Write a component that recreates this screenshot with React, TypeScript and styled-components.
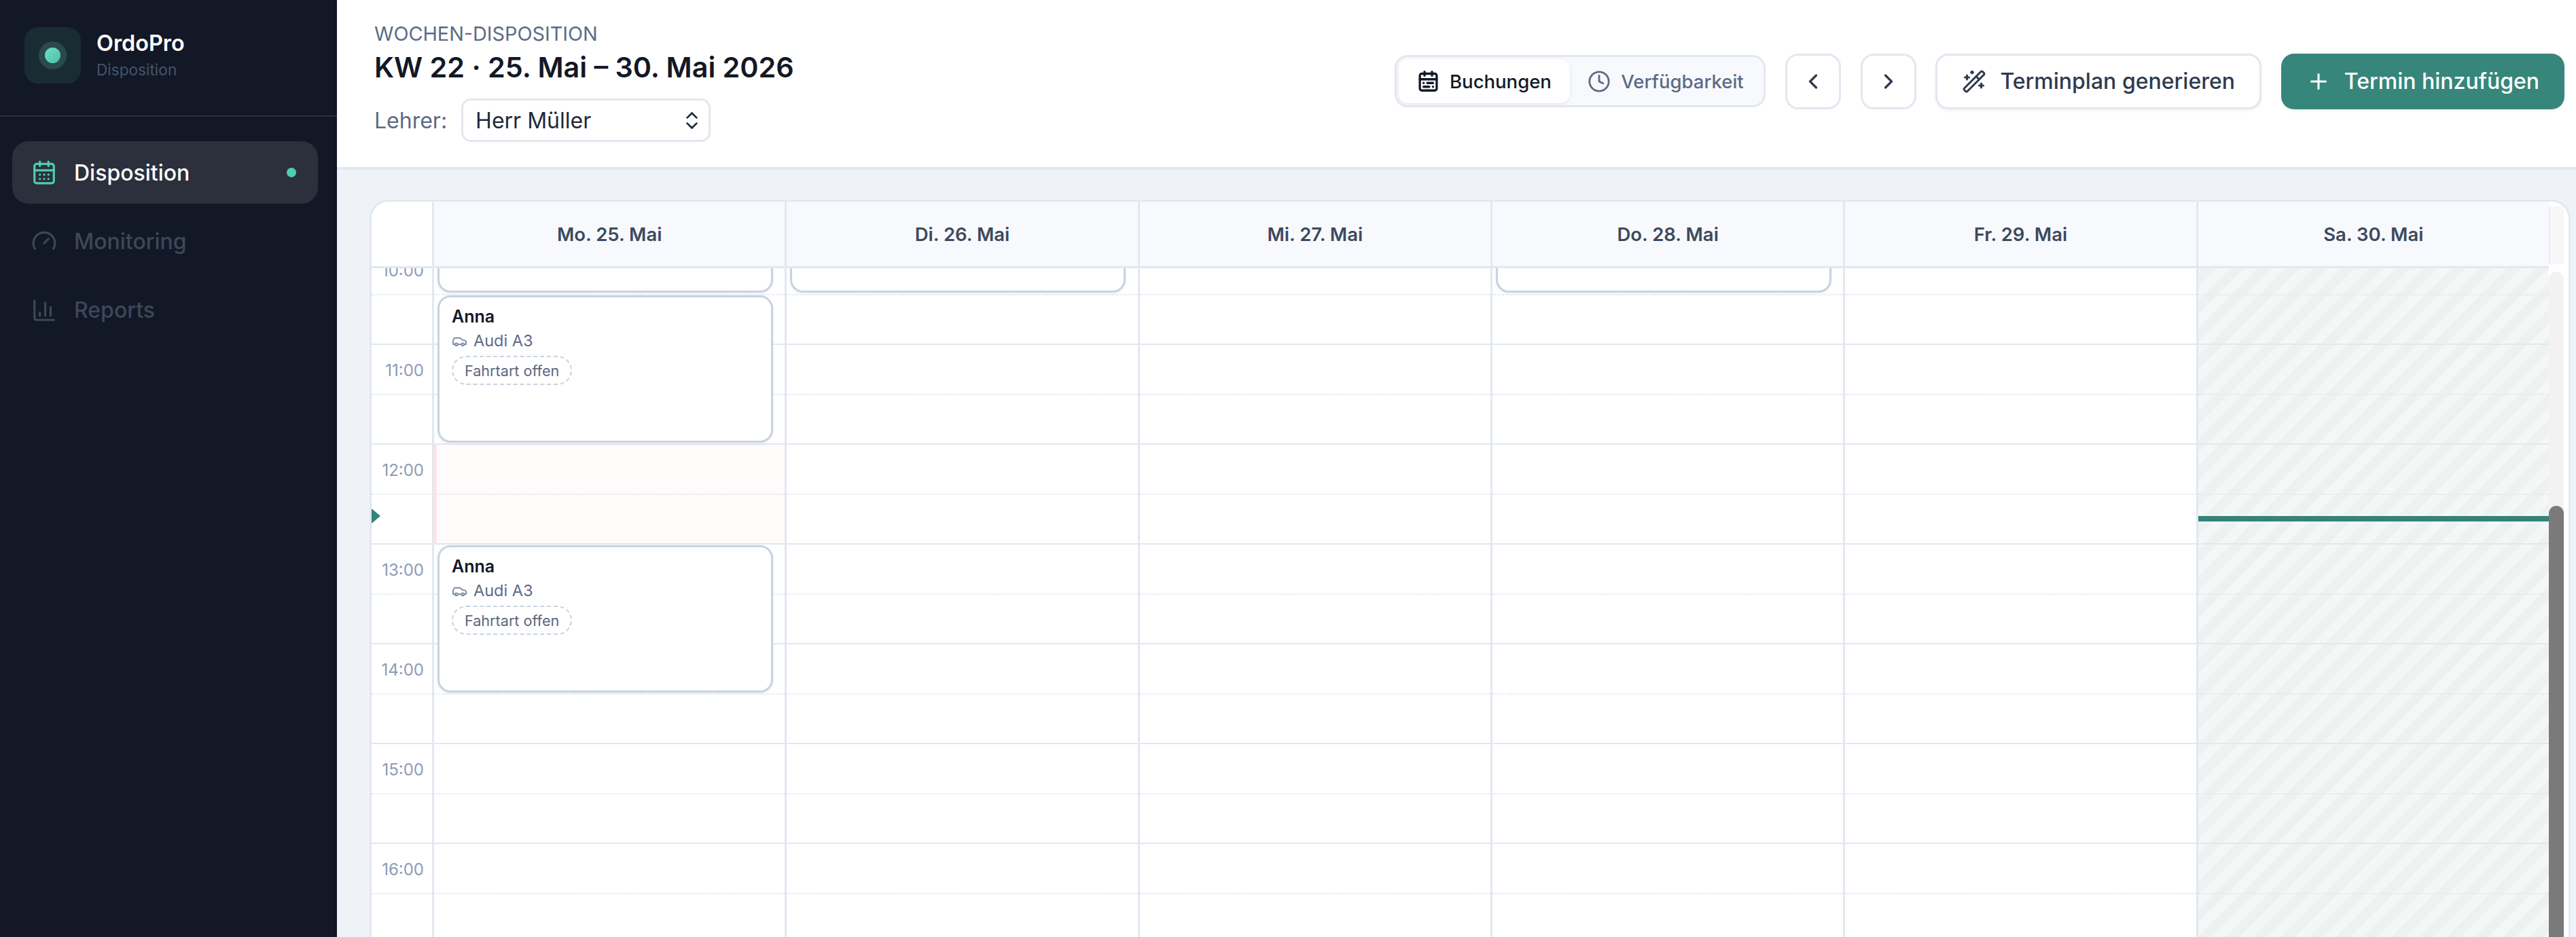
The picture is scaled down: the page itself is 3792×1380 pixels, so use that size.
import React from "react";
import styled, { createGlobalStyle } from "styled-components";
import {
  CalendarDays,
  CalendarRange,
  Car,
  ChartColumn,
  ChevronLeft,
  ChevronRight,
  ChevronsUpDown,
  Clock,
  Gauge,
  Plus,
  WandSparkles,
} from "lucide-react";

const GlobalStyle = createGlobalStyle`
  * { box-sizing: border-box; }
  html, body { margin: 0; padding: 0; height: 100%; overflow: hidden; }
  body { font-family: Inter, "Liberation Sans", sans-serif; background: #eff3f8; }
`;

const Shell = styled.div`
  display: flex;
  width: 3792px;
  height: 1380px;
  overflow: hidden;
`;

const Sidebar = styled.aside`
  width: 496px;
  flex-shrink: 0;
  background: #121826;
  display: flex;
  flex-direction: column;
`;

const Brand = styled.div`
  height: 172px;
  padding: 40px 36px 0;
  display: flex;
  gap: 23px;
  border-bottom: 2.4px solid #2a303d;
`;

const LogoTile = styled.div`
  width: 83px;
  height: 83px;
  border-radius: 20px;
  background: #1a2c33;
  display: flex;
  align-items: center;
  justify-content: center;
`;

const LogoRing = styled.div`
  width: 41px;
  height: 41px;
  border-radius: 50%;
  background: #2a4a4c;
  display: flex;
  align-items: center;
  justify-content: center;
`;

const LogoDot = styled.div`
  width: 23px;
  height: 23px;
  border-radius: 50%;
  background: linear-gradient(135deg, #6ee0c2, #4fbfa6);
`;

const BrandText = styled.div`
  display: flex;
  flex-direction: column;
  padding-top: 2px;
`;

const BrandName = styled.div`
  font-size: 32.4px;
  line-height: 44px;
  font-weight: 600;
  color: #ffffff;
`;

const BrandSub = styled.div`
  font-size: 22.6px;
  line-height: 34px;
  color: #46536a;
`;

const Nav = styled.nav`
  display: flex;
  flex-direction: column;
  gap: 9.4px;
  padding: 36px 28px 0 18px;
`;

const NavItem = styled.div<{ $active?: boolean }>`
  height: 92px;
  border-radius: 24px;
  padding: 0 32px 0 28px;
  display: flex;
  align-items: center;
  gap: 25px;
  font-size: 32px;
  font-weight: 500;
  background: ${(p) => (p.$active ? "#2b303c" : "transparent")};
  color: ${(p) => (p.$active ? "#ffffff" : "#3d4759")};
  svg {
    color: ${(p) => (p.$active ? "#4fcdb1" : "#3d4759")};
    flex-shrink: 0;
  }
`;

const NavDot = styled.span`
  margin-left: auto;
  width: 14px;
  height: 14px;
  border-radius: 50%;
  background: #4fcdb1;
`;

const Main = styled.main`
  flex: 1;
  min-width: 0;
  display: flex;
  flex-direction: column;
  overflow: hidden;
`;

const TopBar = styled.header`
  height: 250px;
  flex-shrink: 0;
  background: #ffffff;
  border-bottom: 4px solid #e2e8f0;
  padding: 30px 17px 37px 55px;
  display: flex;
  align-items: center;
  justify-content: space-between;
`;

const TitleBlock = styled.div`
  display: flex;
  flex-direction: column;
`;

const Eyebrow = styled.div`
  padding-top: 2px;
  font-size: 28.8px;
  line-height: 36px;
  color: #5c6b85;
`;

const Title = styled.h1`
  margin: 4px 0 0;
  font-size: 41.3px;
  line-height: 54px;
  font-weight: 600;
  color: #121826;
`;

const TeacherRow = styled.div`
  display: flex;
  align-items: center;
  gap: 21px;
  margin-top: 19px;
`;

const TeacherLabel = styled.span`
  font-size: 32px;
  color: #5c6b85;
`;

const TeacherSelect = styled.div`
  width: 367px;
  height: 64px;
  padding: 0 8px 0 18px;
  border: 3px solid #e2e8f0;
  border-radius: 14px;
  display: flex;
  align-items: center;
  justify-content: space-between;
  font-size: 32px;
  color: #1e293b;
`;

const Actions = styled.div`
  display: flex;
  align-items: center;
  gap: 28.8px;
`;

const Tabs = styled.div`
  height: 77px;
  width: 546px;
  padding: 3px;
  display: flex;
  border: 3px solid #e2e8f0;
  border-radius: 19px;
  background: #f8f9fd;
`;

const Tab = styled.div<{ $active?: boolean }>`
  flex: ${(p) => (p.$active ? "0 0 252px" : "1")};
  display: flex;
  align-items: center;
  justify-content: center;
  gap: 15px;
  border-radius: 14px;
  font-size: 27.5px;
  font-weight: 500;
  background: ${(p) => (p.$active ? "#ffffff" : "transparent")};
  color: ${(p) => (p.$active ? "#121826" : "#5c6b85")};
  box-shadow: ${(p) => (p.$active ? "0 1px 4px rgba(15,23,42,0.1)" : "none")};
`;

const IconButton = styled.button`
  width: 82px;
  height: 82px;
  padding: 0;
  border: 3px solid #e2e8f0;
  border-radius: 19px;
  background: #ffffff;
  color: #2f3a4d;
  display: flex;
  align-items: center;
  justify-content: center;
`;

const ActionButton = styled.button<{ $primary?: boolean }>`
  height: 82px;
  padding: 0 ${(p) => (p.$primary ? "37px" : "36px")};
  display: flex;
  align-items: center;
  gap: 20px;
  border-radius: 19px;
  font-family: inherit;
  font-size: 32px;
  font-weight: 500;
  border: ${(p) => (p.$primary ? "none" : "3px solid #e2e8f0")};
  background: ${(p) => (p.$primary ? "#37867b" : "#ffffff")};
  color: ${(p) => (p.$primary ? "#ffffff" : "#2f3a4d")};
  box-shadow: 0 2px 5px rgba(15, 23, 42, 0.06);
`;

const CalendarCard = styled.section`
  flex-shrink: 0;
  height: 1200px;
  margin: 44px 8px 0 48px;
  background: #ffffff;
  border: 3px solid #e2e7f1;
  border-radius: 28px;
  overflow: hidden;
  display: flex;
  flex-direction: column;
`;

const HeadRow = styled.div`
  height: 98px;
  flex-shrink: 0;
  display: flex;
`;

const HeadGutter = styled.div`
  width: 92px;
  flex-shrink: 0;
  border-right: 3px solid #e2e7f1;
  border-bottom: 3px solid #e2e7f1;
`;

const HeadCell = styled.div`
  flex: 1;
  display: flex;
  align-items: center;
  justify-content: center;
  background: #f8f9fd;
  border-right: 3px solid #e2e7f1;
  border-bottom: 3px solid #e2e7f1;
  font-size: 27.5px;
  font-weight: 600;
  color: #3d4a5e;
  &:nth-of-type(7) { border-right: none; }
`;

const HeadScrollGap = styled.div`
  width: 29px;
  flex-shrink: 0;
  padding: 7px 7px 6px 0;
  div {
    height: 100%;
    background: #f7f7f7;
    border-left: 2px solid #e9ebf0;
  }
`;

const BodyRow = styled.div`
  flex: 1;
  min-height: 0;
  display: flex;
`;

const ScrollArea = styled.div`
  flex: 1;
  min-width: 0;
  overflow: hidden;
`;

const Columns = styled.div`
  display: flex;
  margin-top: -34px;
`;

const GutterColumn = styled.div`
  width: 92px;
  flex-shrink: 0;
  position: relative;
  border-right: 3px solid #e2e7f1;
`;

const DayColumn = styled.div<{ $closed?: boolean }>`
  flex: 1;
  min-width: 0;
  position: relative;
  border-right: ${(p) => (p.$closed ? "none" : "3px solid #e2e7f1")};
  background: ${(p) =>
    p.$closed
      ? "repeating-linear-gradient(135deg, #edf2f1 0 14.4px, #f3f7f6 14.4px 28.8px)"
      : "transparent"};
`;

const Slot = styled.div<{ $hour?: boolean }>`
  height: 73.5px;
  border-bottom: 2.4px ${(p) => (p.$hour ? "solid" : "dotted")} #e2e7f1;
`;

const TimeSlot = styled(Slot)`
  display: flex;
  align-items: center;
  justify-content: flex-end;
  padding: 3px 12px 0 0;
  font-size: 24px;
  color: #8d9bb5;
`;

const NowMarker = styled.div`
  position: absolute;
  left: 0;
  top: 388px;
  width: 13px;
  height: 22px;
  background: #348378;
  clip-path: polygon(0 0, 100% 50%, 0 100%);
`;

const NowLine = styled.div`
  position: absolute;
  left: 0;
  right: 0;
  top: 399px;
  height: 8px;
  background: #348378;
`;

const LunchBlock = styled.div`
  position: absolute;
  left: 0;
  right: 0;
  top: 294px;
  height: 147px;
  background: rgba(248, 113, 133, 0.03);
  border-left: 4px solid #fde4e6;
`;

const Booking = styled.article<{ $top: number; $height: number }>`
  position: absolute;
  left: 5px;
  width: 494px;
  top: ${(p) => p.$top}px;
  height: ${(p) => p.$height}px;
  padding: 11px 18px;
  background: #ffffff;
  border: 3px solid #c8d3e0;
  border-radius: 19px;
  box-shadow: 0 2px 4px rgba(15, 23, 42, 0.05);
`;

const BookingName = styled.div`
  font-size: 25px;
  line-height: 34px;
  font-weight: 600;
  color: #121826;
`;

const BookingCar = styled.div`
  display: flex;
  align-items: center;
  gap: 9px;
  margin-top: 2px;
  font-size: 23.5px;
  line-height: 34px;
  color: #5c6b85;
  svg { color: #7d8aa3; }
`;

const DashedPill = styled.span`
  display: inline-flex;
  align-items: center;
  height: 43px;
  margin-top: 5px;
  padding: 0 17px;
  border: 2.4px dashed #c8d3e0;
  border-radius: 22px;
  font-size: 21.6px;
  color: #5b6880;
`;

const ScrollRail = styled.div`
  width: 22px;
  flex-shrink: 0;
  margin: 5px 7px 0 0;
  border-radius: 11px 11px 0 0;
  background: #f2f2f2;
  padding-top: 345px;
  display: flex;
`;

const ScrollThumb = styled.div`
  flex: 1;
  background: #7a7a7a;
  border-radius: 11px 11px 0 0;
`;

const days = ["Mo. 25. Mai", "Di. 26. Mai", "Mi. 27. Mai", "Do. 28. Mai", "Fr. 29. Mai", "Sa. 30. Mai"];
const hours = [10, 11, 12, 13, 14, 15, 16, 17];

function Slots() {
  return (
    <>
      {hours.map((h) => (
        <React.Fragment key={h}>
          <Slot />
          <Slot $hour />
        </React.Fragment>
      ))}
    </>
  );
}

function AnnaBooking({ top }: { top: number }) {
  return (
    <Booking $top={top} $height={217}>
      <BookingName>Anna</BookingName>
      <BookingCar>
        <Car size={23} strokeWidth={2} />
        Audi A3
      </BookingCar>
      <DashedPill>Fahrtart offen</DashedPill>
    </Booking>
  );
}

export default function App() {
  return (
    <Shell>
      <GlobalStyle />
      <Sidebar>
        <Brand>
          <LogoTile>
            <LogoRing>
              <LogoDot />
            </LogoRing>
          </LogoTile>
          <BrandText>
            <BrandName>OrdoPro</BrandName>
            <BrandSub>Disposition</BrandSub>
          </BrandText>
        </Brand>
        <Nav>
          <NavItem $active>
            <CalendarDays size={38} strokeWidth={2} />
            Disposition
            <NavDot />
          </NavItem>
          <NavItem>
            <Gauge size={38} strokeWidth={2} />
            Monitoring
          </NavItem>
          <NavItem>
            <ChartColumn size={38} strokeWidth={2} />
            Reports
          </NavItem>
        </Nav>
      </Sidebar>
      <Main>
        <TopBar>
          <TitleBlock>
            <Eyebrow>WOCHEN-DISPOSITION</Eyebrow>
            <Title>KW 22 · 25. Mai – 30. Mai 2026</Title>
            <TeacherRow>
              <TeacherLabel>Lehrer:</TeacherLabel>
              <TeacherSelect>
                Herr Müller
                <ChevronsUpDown size={33} strokeWidth={2} />
              </TeacherSelect>
            </TeacherRow>
          </TitleBlock>
          <Actions>
            <Tabs>
              <Tab $active>
                <CalendarRange size={33} strokeWidth={2.4} />
                Buchungen
              </Tab>
              <Tab>
                <Clock size={34} strokeWidth={2} />
                Verfügbarkeit
              </Tab>
            </Tabs>
            <IconButton>
              <ChevronLeft size={36} strokeWidth={2.2} />
            </IconButton>
            <IconButton>
              <ChevronRight size={36} strokeWidth={2.2} />
            </IconButton>
            <ActionButton>
              <WandSparkles size={36} strokeWidth={2} />
              Terminplan generieren
            </ActionButton>
            <ActionButton $primary>
              <Plus size={36} strokeWidth={2} />
              Termin hinzufügen
            </ActionButton>
          </Actions>
        </TopBar>
        <CalendarCard>
          <HeadRow>
            <HeadGutter />
            {days.map((d) => (
              <HeadCell key={d}>{d}</HeadCell>
            ))}
            <HeadScrollGap>
              <div />
            </HeadScrollGap>
          </HeadRow>
          <BodyRow>
            <ScrollArea>
              <Columns>
                <GutterColumn>
                  {hours.map((h) => (
                    <React.Fragment key={h}>
                      <TimeSlot>{h}:00</TimeSlot>
                      <Slot $hour />
                    </React.Fragment>
                  ))}
                  <NowMarker />
                </GutterColumn>
                <DayColumn>
                  <Slots />
                  <LunchBlock />
                  <Booking $top={-100} $height={170} />
                  <AnnaBooking top={74} />
                  <AnnaBooking top={442} />
                </DayColumn>
                <DayColumn>
                  <Slots />
                  <Booking $top={-100} $height={170} />
                </DayColumn>
                <DayColumn>
                  <Slots />
                </DayColumn>
                <DayColumn>
                  <Slots />
                  <Booking $top={-100} $height={170} />
                </DayColumn>
                <DayColumn>
                  <Slots />
                </DayColumn>
                <DayColumn $closed>
                  <Slots />
                  <NowLine />
                </DayColumn>
              </Columns>
            </ScrollArea>
            <ScrollRail>
              <ScrollThumb />
            </ScrollRail>
          </BodyRow>
        </CalendarCard>
      </Main>
    </Shell>
  );
}
